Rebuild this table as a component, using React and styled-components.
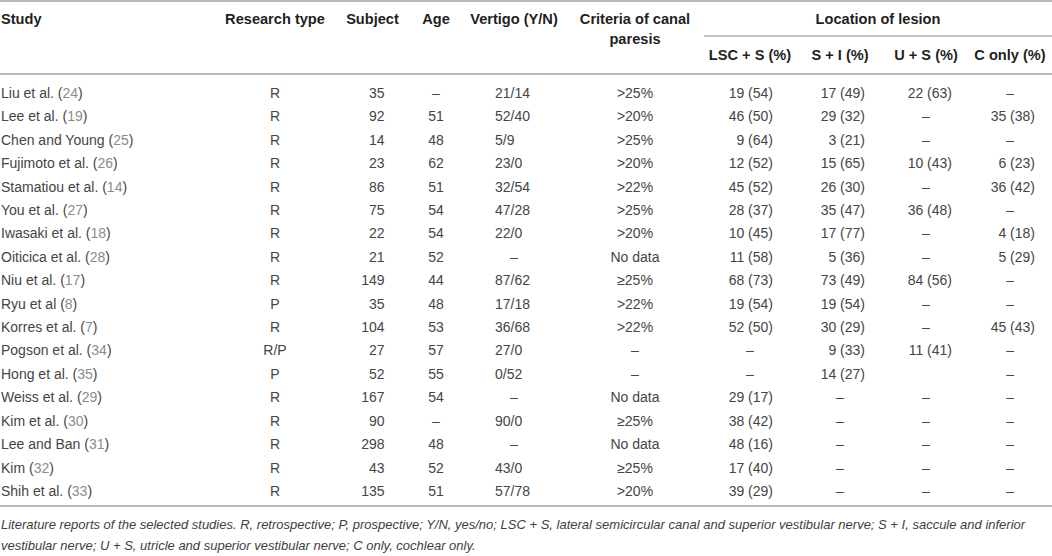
import React from 'react'
import styled, { createGlobalStyle } from 'styled-components'

const GlobalStyle = createGlobalStyle`
  html, body {
    margin: 0;
    padding: 0;
    background: #fff;
  }
  body {
    font-family: 'Liberation Sans', Arial, sans-serif;
  }
`

const colors = {
  text: '#454545',
  head: '#1f1f1f',
  ref: '#8c8c8c',
  rule: '#b8b8b8',
}

const Wrapper = styled.div`
  width: 1052px;
`

const Table = styled.table`
  width: 1052px;
  table-layout: fixed;
  border-collapse: separate;
  border-spacing: 0;
  border-top: 2px solid ${colors.rule};
  border-bottom: 2px solid ${colors.rule};
  font-size: 14px;
  color: ${colors.text};
`

const Th = styled.th`
  font-weight: 700;
  font-size: 14.6px;
  color: ${colors.head};
  line-height: 20px;
  vertical-align: top;
  text-align: ${p => p.$align || 'center'};
  padding: ${p => (p.$sub ? '8px 2px 8px' : '7px 2px 0')};
  padding-left: ${p => (p.$align === 'left' ? '1px' : '2px')};
  border-bottom: ${p => (p.$last ? `2px solid ${colors.rule}` : 'none')};
`

const GroupTh = styled(Th)`
  padding-bottom: 6px;
  border-bottom: 2px solid #c4c4c4;
`

const Td = styled.td`
  line-height: 23.4px;
  padding: ${p => (p.$first ? '7px 2px 0' : p.$final ? '0 2px 2px' : '0 2px')};
  padding-left: ${p => (p.$align === 'left' ? '1px' : `${2 + (p.$shift || 0)}px`)};
  text-align: ${p => p.$align || 'center'};
  white-space: nowrap;
`

const Val = styled.span`
  display: inline-block;
  width: ${p => p.$w}px;
  text-align: ${p => p.$align};
`

const Ref = styled.span`
  color: ${colors.ref};
`

const Footnote = styled.p`
  margin: 0;
  padding: 7px 0 0 1px;
  font-size: 13px;
  line-height: 21px;
  font-style: italic;
  color: #3e3e3e;
  white-space: nowrap;
`

// width of each column and how its numbers line up
const columns = [
  { key: 'study', width: 215, align: 'left' },
  { key: 'type', width: 120 },
  { key: 'subject', width: 75, box: 24, boxAlign: 'right' },
  { key: 'age', width: 52 },
  { key: 'vertigo', width: 104, box: 38, boxAlign: 'left', shift: -4 },
  { key: 'criteria', width: 138 },
  { key: 'lsc', width: 92, box: 46, boxAlign: 'right' },
  { key: 'si', width: 88, box: 46, boxAlign: 'right', shift: 4 },
  { key: 'us', width: 84, box: 46, boxAlign: 'right', shift: 6 },
  { key: 'c', width: 84, box: 46, boxAlign: 'right', shift: 4 },
]

const rows = [
  ['Liu et al.', '24', 'R', '35', '–', '21/14', '>25%', '19 (54)', '17 (49)', '22 (63)', '–'],
  ['Lee et al.', '19', 'R', '92', '51', '52/40', '>20%', '46 (50)', '29 (32)', '–', '35 (38)'],
  ['Chen and Young', '25', 'R', '14', '48', '5/9', '>25%', '9 (64)', '3 (21)', '–', '–'],
  ['Fujimoto et al.', '26', 'R', '23', '62', '23/0', '>20%', '12 (52)', '15 (65)', '10 (43)', '6 (23)'],
  ['Stamatiou et al.', '14', 'R', '86', '51', '32/54', '>22%', '45 (52)', '26 (30)', '–', '36 (42)'],
  ['You et al.', '27', 'R', '75', '54', '47/28', '>25%', '28 (37)', '35 (47)', '36 (48)', '–'],
  ['Iwasaki et al.', '18', 'R', '22', '54', '22/0', '>20%', '10 (45)', '17 (77)', '–', '4 (18)'],
  ['Oiticica et al.', '28', 'R', '21', '52', '–', 'No data', '11 (58)', '5 (36)', '–', '5 (29)'],
  ['Niu et al.', '17', 'R', '149', '44', '87/62', '≥25%', '68 (73)', '73 (49)', '84 (56)', '–'],
  ['Ryu et al', '8', 'P', '35', '48', '17/18', '>22%', '19 (54)', '19 (54)', '–', '–'],
  ['Korres et al.', '7', 'R', '104', '53', '36/68', '>22%', '52 (50)', '30 (29)', '–', '45 (43)'],
  ['Pogson et al.', '34', 'R/P', '27', '57', '27/0', '–', '–', '9 (33)', '11 (41)', '–'],
  ['Hong et al.', '35', 'P', '52', '55', '0/52', '–', '–', '14 (27)', '', '–'],
  ['Weiss et al.', '29', 'R', '167', '54', '–', 'No data', '29 (17)', '–', '–', '–'],
  ['Kim et al.', '30', 'R', '90', '–', '90/0', '≥25%', '38 (42)', '–', '–', '–'],
  ['Lee and Ban', '31', 'R', '298', '48', '–', 'No data', '48 (16)', '–', '–', '–'],
  ['Kim', '32', 'R', '43', '52', '43/0', '≥25%', '17 (40)', '–', '–', '–'],
  ['Shih et al.', '33', 'R', '135', '51', '57/78', '>20%', '39 (29)', '–', '–', '–'],
]

const Cell = ({ col, value, first, final }) => {
  const isDash = value === '–' || value === ''
  return (
    <Td $align={col.align} $shift={isDash ? 0 : col.shift} $first={first} $final={final}>
      {col.box && !isDash ? (
        <Val $w={col.box} $align={col.boxAlign}>
          {value}
        </Val>
      ) : (
        value
      )}
    </Td>
  )
}

const StudyTable = () => (
  <Table>
    <colgroup>
      {columns.map(c => (
        <col key={c.key} style={{ width: c.width }} />
      ))}
    </colgroup>
    <thead>
      <tr>
        <Th rowSpan={2} $align="left" $last>Study</Th>
        <Th rowSpan={2} $last>Research type</Th>
        <Th rowSpan={2} $last>Subject</Th>
        <Th rowSpan={2} $last>Age</Th>
        <Th rowSpan={2} $last>Vertigo (Y/N)</Th>
        <Th rowSpan={2} $last>
          Criteria of canal
          <br />
          paresis
        </Th>
        <GroupTh colSpan={4}>Location of lesion</GroupTh>
      </tr>
      <tr>
        <Th $sub $last>LSC + S (%)</Th>
        <Th $sub $last>S + I (%)</Th>
        <Th $sub $last>U + S (%)</Th>
        <Th $sub $last>C only (%)</Th>
      </tr>
    </thead>
    <tbody>
      {rows.map(([name, ref, ...rest], i) => {
        const first = i === 0
        const final = i === rows.length - 1
        return (
          <tr key={name + ref}>
            <Td $align="left" $first={first} $final={final}>
              {name} (<Ref>{ref}</Ref>)
            </Td>
            {rest.map((v, j) => (
              <Cell key={j} col={columns[j + 1]} value={v} first={first} final={final} />
            ))}
          </tr>
        )
      })}
    </tbody>
  </Table>
)

const App = () => (
  <Wrapper>
    <GlobalStyle />
    <StudyTable />
    <Footnote>
      Literature reports of the selected studies. R, retrospective; P, prospective; Y/N, yes/no; LSC + S, lateral
      semicircular canal and superior vestibular nerve; S + I, saccule and inferior
      <br />
      vestibular nerve; U + S, utricle and superior vestibular nerve; C only, cochlear only.
    </Footnote>
  </Wrapper>
)

export default App
